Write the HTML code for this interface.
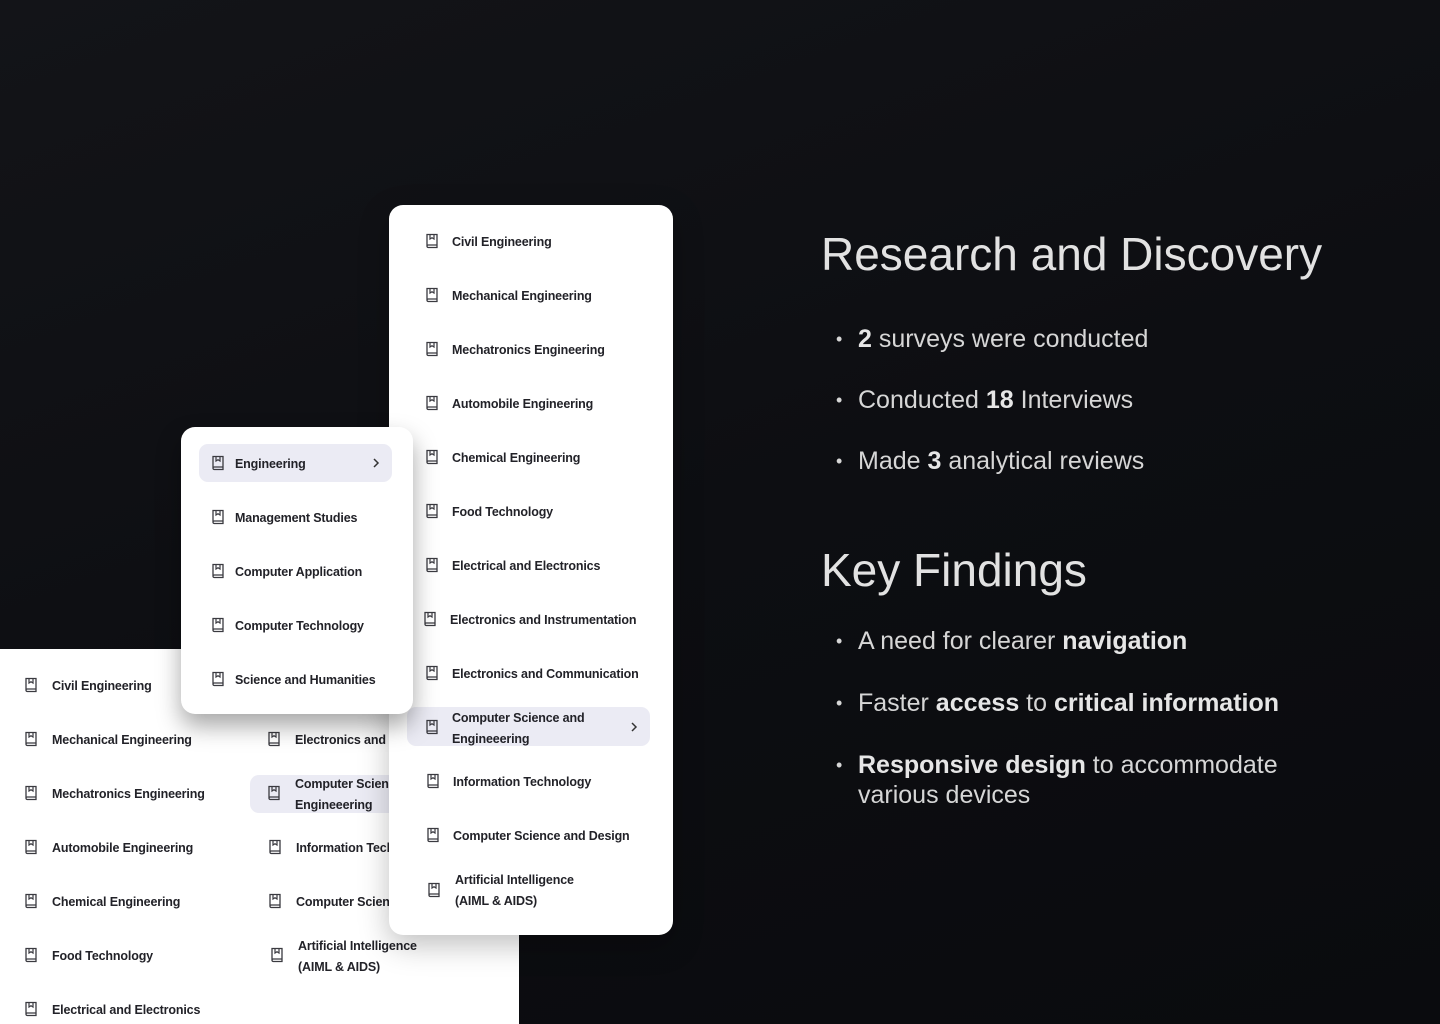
<!DOCTYPE html>
<html><head><meta charset="utf-8"><style>
*{margin:0;padding:0;box-sizing:border-box}
body{width:1440px;height:1024px;overflow:hidden;position:relative;background:linear-gradient(160deg,#131418 0%,#0d0e12 50%,#0a0b0e 100%);font-family:"Liberation Sans",sans-serif}
.p{position:absolute;background:#fff}
.it{position:absolute;font-size:12.5px;font-weight:bold;color:#222228;white-space:nowrap;line-height:21px;letter-spacing:-0.15px;margin-top:2px}
.ic{position:absolute;width:14px;height:16px}
.hl{position:absolute;background:#ebebf4;border-radius:9px}
.ch{position:absolute;width:8px;height:12px}
h1{position:absolute;left:821px;font-size:46px;font-weight:normal;color:#e2e2e2;line-height:52px;white-space:nowrap}
.b{position:absolute;left:836px;font-size:25px;color:#d6d6d6;line-height:30px;width:480px}
.b:before{content:"•";position:absolute;left:0;top:0;font-size:18px}
.b span{display:block;margin-left:22px}
.b b{color:#e6e6e6}
</style></head><body>
<svg width="0" height="0" style="position:absolute"><defs><symbol id="bk" viewBox="0 0 14 16"><path d="M2 1.5h10v10.5H3.2a1.2 1.2 0 0 0-1.2 1.2V1.5z M2 13.2a1.3 1.3 0 0 0 1.3 1.3H12V12" fill="none" stroke="#3a3a40" stroke-width="1.3"/><path d="M5 1.5v4.5l2-1.3 2 1.3V1.5" fill="none" stroke="#3a3a40" stroke-width="1.2"/></symbol></defs></svg>

<div class="p" style="left:0;top:649px;width:519px;height:375px">
  <div class="hl" style="left:250px;top:126px;width:160px;height:38px"></div>
  <svg class="ic" style="left:24px;top:28px"><use href="#bk"/></svg><div class="it" style="left:52px;top:25px">Civil Engineering</div>
  <svg class="ic" style="left:24px;top:82px"><use href="#bk"/></svg><div class="it" style="left:52px;top:79px">Mechanical Engineering</div>
  <svg class="ic" style="left:24px;top:136px"><use href="#bk"/></svg><div class="it" style="left:52px;top:133px">Mechatronics Engineering</div>
  <svg class="ic" style="left:24px;top:190px"><use href="#bk"/></svg><div class="it" style="left:52px;top:187px">Automobile Engineering</div>
  <svg class="ic" style="left:24px;top:244px"><use href="#bk"/></svg><div class="it" style="left:52px;top:241px">Chemical Engineering</div>
  <svg class="ic" style="left:24px;top:298px"><use href="#bk"/></svg><div class="it" style="left:52px;top:295px">Food Technology</div>
  <svg class="ic" style="left:24px;top:352px"><use href="#bk"/></svg><div class="it" style="left:52px;top:349px">Electrical and Electronics</div>
  <svg class="ic" style="left:267px;top:82px"><use href="#bk"/></svg><div class="it" style="left:295px;top:79px">Electronics and Communication</div>
  <svg class="ic" style="left:267px;top:136px"><use href="#bk"/></svg><div class="it" style="left:295px;top:123px">Computer Science and<br>Engineeering</div>
  <svg class="ic" style="left:268px;top:190px"><use href="#bk"/></svg><div class="it" style="left:296px;top:187px">Information Technology</div>
  <svg class="ic" style="left:268px;top:244px"><use href="#bk"/></svg><div class="it" style="left:296px;top:241px">Computer Science and Design</div>
  <svg class="ic" style="left:270px;top:298px"><use href="#bk"/></svg><div class="it" style="left:298px;top:285px">Artificial Intelligence<br>(AIML &amp; AIDS)</div>
</div>

<div class="p" style="left:389px;top:205px;width:284px;height:730px;border-radius:14px;box-shadow:0 10px 30px rgba(0,0,0,0.25)">
  <div class="hl" style="left:18px;top:502px;width:243px;height:39px"></div>
  <svg class="ic" style="left:36px;top:28px"><use href="#bk"/></svg><div class="it" style="left:63px;top:25px">Civil Engineering</div>
  <svg class="ic" style="left:36px;top:82px"><use href="#bk"/></svg><div class="it" style="left:63px;top:79px">Mechanical Engineering</div>
  <svg class="ic" style="left:36px;top:136px"><use href="#bk"/></svg><div class="it" style="left:63px;top:133px">Mechatronics Engineering</div>
  <svg class="ic" style="left:36px;top:190px"><use href="#bk"/></svg><div class="it" style="left:63px;top:187px">Automobile Engineering</div>
  <svg class="ic" style="left:36px;top:244px"><use href="#bk"/></svg><div class="it" style="left:63px;top:241px">Chemical Engineering</div>
  <svg class="ic" style="left:36px;top:298px"><use href="#bk"/></svg><div class="it" style="left:63px;top:295px">Food Technology</div>
  <svg class="ic" style="left:36px;top:352px"><use href="#bk"/></svg><div class="it" style="left:63px;top:349px">Electrical and Electronics</div>
  <svg class="ic" style="left:34px;top:406px"><use href="#bk"/></svg><div class="it" style="left:61px;top:403px">Electronics and Instrumentation</div>
  <svg class="ic" style="left:36px;top:460px"><use href="#bk"/></svg><div class="it" style="left:63px;top:457px">Electronics and Communication</div>
  <svg class="ic" style="left:36px;top:514px"><use href="#bk"/></svg><div class="it" style="left:63px;top:501px">Computer Science and<br>Engineeering</div>
  <svg class="ch" style="left:241px;top:516px" viewBox="0 0 8 12"><path d="M2 2l4 4-4 4" fill="none" stroke="#333" stroke-width="1.5"/></svg>
  <svg class="ic" style="left:37px;top:568px"><use href="#bk"/></svg><div class="it" style="left:64px;top:565px">Information Technology</div>
  <svg class="ic" style="left:37px;top:622px"><use href="#bk"/></svg><div class="it" style="left:64px;top:619px">Computer Science and Design</div>
  <svg class="ic" style="left:38px;top:677px"><use href="#bk"/></svg><div class="it" style="left:66px;top:663px">Artificial Intelligence<br>(AIML &amp; AIDS)</div>
</div>

<div class="p" style="left:181px;top:427px;width:232px;height:287px;border-radius:14px;box-shadow:0 12px 24px rgba(0,0,0,0.35)">
  <div class="hl" style="left:18px;top:17px;width:193px;height:38px"></div>
  <svg class="ic" style="left:30px;top:28px"><use href="#bk"/></svg><div class="it" style="left:54px;top:25px">Engineering</div>
  <svg class="ch" style="left:191px;top:30px" viewBox="0 0 8 12"><path d="M2 2l4 4-4 4" fill="none" stroke="#333" stroke-width="1.5"/></svg>
  <svg class="ic" style="left:30px;top:82px"><use href="#bk"/></svg><div class="it" style="left:54px;top:79px">Management Studies</div>
  <svg class="ic" style="left:30px;top:136px"><use href="#bk"/></svg><div class="it" style="left:54px;top:133px">Computer Application</div>
  <svg class="ic" style="left:30px;top:190px"><use href="#bk"/></svg><div class="it" style="left:54px;top:187px">Computer Technology</div>
  <svg class="ic" style="left:30px;top:244px"><use href="#bk"/></svg><div class="it" style="left:54px;top:241px">Science and Humanities</div>
</div>

<h1 style="top:228px">Research and Discovery</h1>
<div class="b" style="top:324px"><span><b>2</b> surveys were conducted</span></div>
<div class="b" style="top:385px"><span>Conducted <b>18</b> Interviews</span></div>
<div class="b" style="top:446px"><span>Made <b>3</b> analytical reviews</span></div>

<h1 style="top:544px">Key Findings</h1>
<div class="b" style="top:626px"><span>A need for clearer <b>navigation</b></span></div>
<div class="b" style="top:688px"><span>Faster <b>access</b> to <b>critical information</b></span></div>
<div class="b" style="top:750px"><span><b>Responsive design</b> to accommodate various devices</span></div>
</body></html>
